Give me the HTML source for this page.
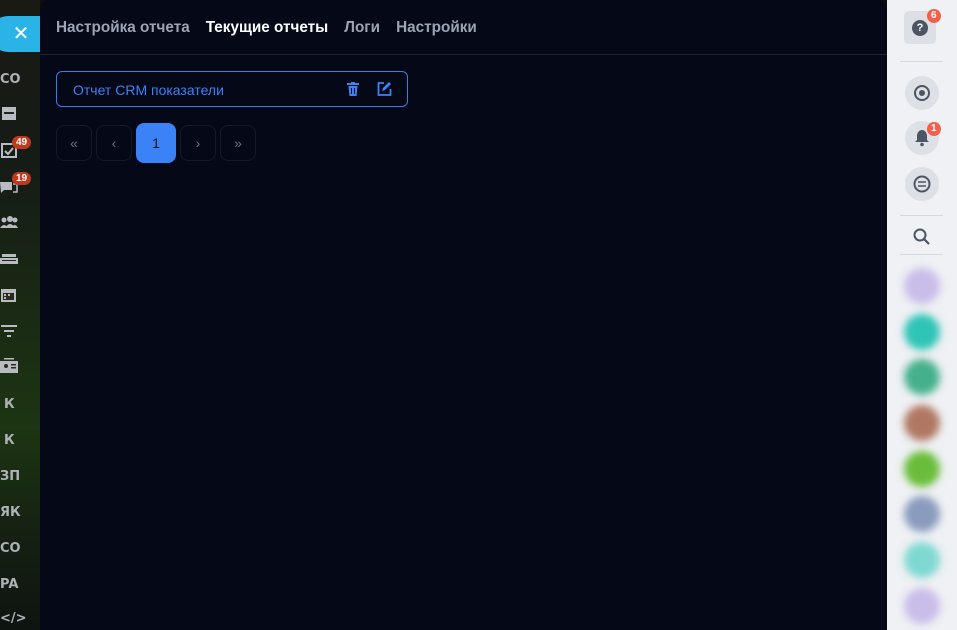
<!DOCTYPE html>
<html><head><meta charset="utf-8"><style>
*{margin:0;padding:0;box-sizing:border-box}
body{width:957px;height:630px;overflow:hidden;position:relative;font-family:"Liberation Sans","DejaVu Sans",sans-serif;background:#0b0f10}
#left{position:absolute;left:0;top:0;width:40px;height:630px;background:linear-gradient(180deg,#1a1a14 0%,#151b16 25%,#1a2a14 50%,#1d3512 68%,#152012 85%,#0e1410 100%)}
.li{position:absolute;left:0;width:40px;color:#aeb2b6;font-weight:bold;font-size:13px;font-family:"DejaVu Sans",sans-serif}
.badge{position:absolute;background:#c0391f;color:#fff;font-size:10px;border-radius:8px;padding:1px 4px;font-weight:bold}
#close{position:absolute;left:-10px;top:16px;width:52px;height:36px;background:#2ab3e6;border-radius:18px 0 0 18px;color:#fff;font-size:20px;text-align:center;line-height:36px;padding-left:10px}
#main{position:absolute;left:40px;top:0;width:847px;height:630px;background:#040817;border-top-left-radius:10px;border-top-right-radius:10px}
.tabs{position:absolute;top:19px;left:16px;font-size:15.3px;font-weight:bold;color:#9aa4b3;white-space:nowrap}
.tabs span{margin-right:16px}
.line{position:absolute;left:0;right:0;top:54px;height:1px;background:#1c2433}
.card{position:absolute;left:16px;top:71px;width:352px;height:36px;border:1px solid #3b7de6;border-radius:6px;color:#3b82f6;font-size:14px;line-height:36px;padding-left:16px}
.pg{position:absolute;top:125px;width:36px;height:36px;border:1px solid #141a28;border-radius:8px;color:#6b7280;font-size:14px;text-align:center;line-height:34px}
#right{position:absolute;left:887px;top:0;width:70px;height:630px;background:#eff1f4}
.rb{position:absolute;left:18px;width:34px;height:34px;border-radius:50%;background:#dde0e5}
.sep{position:absolute;left:13px;width:43px;height:1px;background:#d6d9de}
.av{position:absolute;left:17px;width:36px;height:36px;border-radius:50%;filter:blur(4px)}
.rbadge{position:absolute;background:#f0604d;color:#fff;font-size:10px;border-radius:7px;padding:0 4px;font-weight:bold;line-height:14px}
</style></head><body>
<div id="left">
<div class="li" style="top:72px">CO</div>
<div class="li" style="top:106px;left:1px"><svg width="16" height="15"><rect x="1" y="1" width="14" height="13" fill="#b8bcc0"/><rect x="3" y="6" width="10" height="2" fill="#222"/></svg></div>
<div class="li" style="top:143px;left:1px"><svg width="16" height="15"><rect x="1" y="1" width="14" height="13" fill="none" stroke="#b8bcc0" stroke-width="2"/><path d="M4 8l3 3 5-6" stroke="#b8bcc0" stroke-width="2" fill="none"/></svg></div>
<div class="badge" style="left:12px;top:136px">49</div>
<div class="li" style="top:180px"><svg width="18" height="15"><path d="M0 2h12v8H4l-3 3z" fill="#b8bcc0"/><path d="M13 4h4v8h-4" fill="none" stroke="#b8bcc0" stroke-width="1.5"/></svg></div>
<div class="badge" style="left:12px;top:172px">19</div>
<div class="li" style="top:216px"><svg width="18" height="14"><circle cx="4" cy="4" r="2.5" fill="#b8bcc0"/><circle cx="10" cy="3" r="3" fill="#b8bcc0"/><circle cx="15" cy="4" r="2.5" fill="#b8bcc0"/><path d="M0 12q4-6 8 0zM5 12q5-8 10 0zM11 12q4-6 7 0z" fill="#b8bcc0"/></svg></div>
<div class="li" style="top:252px"><svg width="18" height="14"><rect x="2" y="2" width="14" height="3" fill="#b8bcc0"/><rect x="0" y="6" width="18" height="6" fill="#b8bcc0"/><rect x="2" y="8" width="14" height="1" fill="#222"/></svg></div>
<div class="li" style="top:287px"><svg width="17" height="16"><rect x="1" y="2" width="15" height="13" fill="#b8bcc0"/><rect x="3" y="6" width="11" height="7" fill="#2a2a20"/><rect x="4" y="7" width="2" height="2" fill="#b8bcc0"/><rect x="8" y="7" width="2" height="2" fill="#b8bcc0"/><rect x="4" y="10" width="2" height="2" fill="#b8bcc0"/></svg></div>
<div class="li" style="top:324px"><svg width="18" height="14"><rect x="1" y="1" width="16" height="2" fill="#b8bcc0"/><rect x="4" y="6" width="10" height="2" fill="#b8bcc0"/><rect x="7" y="11" width="4" height="2" fill="#b8bcc0"/></svg></div>
<div class="li" style="top:358px"><svg width="18" height="16"><rect x="4" y="0" width="10" height="1.5" fill="#b8bcc0"/><rect x="0" y="3" width="18" height="12" fill="#b8bcc0"/><circle cx="6" cy="8" r="2" fill="#2a2a20"/><rect x="11" y="6" width="5" height="1.5" fill="#2a2a20"/><rect x="11" y="9" width="5" height="1.5" fill="#2a2a20"/></svg></div>
<div class="li" style="top:397px;left:4px">К</div>
<div class="li" style="top:433px;left:4px">К</div>
<div class="li" style="top:469px">ЗП</div>
<div class="li" style="top:505px">ЯК</div>
<div class="li" style="top:541px">CO</div>
<div class="li" style="top:577px">PA</div>
<div class="li" style="top:611px">&lt;/&gt;</div>
<div id="close">✕</div>
</div>
<div id="main">
<div class="tabs"><span>Настройка отчета</span><span style="color:#fff">Текущие отчеты</span><span>Логи</span><span>Настройки</span></div>
<div class="line"></div>
<div class="card">Отчет CRM показатели
<svg style="position:absolute;left:290px;top:10px" width="12" height="14"><rect x="0" y="1" width="12" height="2" fill="#3b82f6"/><rect x="4" y="0" width="4" height="2" fill="#3b82f6"/><path d="M1.5 4h9l-1 10h-7z" fill="#3b82f6"/><path d="M4.5 6v6M7.5 6v6" stroke="#040817" stroke-width="1"/></svg>
<svg style="position:absolute;left:320px;top:9px" width="15" height="15"><path d="M7 2H1.5v12h12V8" fill="none" stroke="#3b82f6" stroke-width="1.8"/><path d="M5 10l1-3 6-6 2 2-6 6z" fill="#3b82f6"/></svg>
</div>
<div class="pg" style="left:16px">«</div>
<div class="pg" style="left:56px">‹</div>
<div class="pg" style="left:96px;top:123px;width:40px;height:40px;background:#3b82f6;border:none;color:#0b1020;line-height:40px">1</div>
<div class="pg" style="left:140px">›</div>
<div class="pg" style="left:180px">»</div>
</div>
<div id="right">
<div style="position:absolute;left:17px;top:11px;width:32px;height:33px;border-radius:5px;background:#dcdfe3"></div>
<div style="position:absolute;left:25px;top:20px;width:16px;height:16px;border-radius:50%;background:#4b5563;color:#fff;font-size:11px;font-weight:bold;text-align:center;line-height:16px">?</div>
<div class="rbadge" style="left:40px;top:9px">6</div>
<div class="sep" style="top:61px"></div>
<div class="rb" style="top:76px"></div>
<svg style="position:absolute;left:25px;top:83px" width="20" height="20"><circle cx="10" cy="10" r="7" fill="none" stroke="#4b5563" stroke-width="2"/><circle cx="10" cy="10" r="3" fill="#4b5563"/></svg>
<div class="rb" style="top:121px"></div>
<svg style="position:absolute;left:27px;top:129px" width="16" height="18"><path d="M8 1c-3 0-5 3-5 6v4l-2 2h14l-2-2V7c0-3-2-6-5-6z" fill="#4b5563"/><circle cx="8" cy="15.5" r="1.8" fill="#4b5563"/></svg>
<div class="rbadge" style="left:40px;top:122px">1</div>
<div class="rb" style="top:167px"></div>
<svg style="position:absolute;left:25px;top:174px" width="20" height="20"><circle cx="10" cy="10" r="7.5" fill="none" stroke="#4b5563" stroke-width="2"/><path d="M6 8h8M6 12h8" stroke="#4b5563" stroke-width="1.6"/></svg>
<div class="sep" style="top:215px"></div>
<svg style="position:absolute;left:25px;top:227px" width="20" height="20"><circle cx="8" cy="8" r="5.5" fill="none" stroke="#4b5563" stroke-width="2"/><path d="M12 12l5 5" stroke="#4b5563" stroke-width="2.2"/></svg>
<div class="sep" style="top:254px"></div>
<div class="av" style="top:268px;background:#c9bde9"></div>
<div class="av" style="top:314px;background:#2ec4b6"></div>
<div class="av" style="top:359px;background:#45b08c"></div>
<div class="av" style="top:405px;background:#b07862"></div>
<div class="av" style="top:451px;background:#6abd3a"></div>
<div class="av" style="top:496px;background:#8a9bbd"></div>
<div class="av" style="top:542px;background:#7fd8d2"></div>
<div class="av" style="top:588px;background:#c9bde9"></div>
</div>
</body></html>
